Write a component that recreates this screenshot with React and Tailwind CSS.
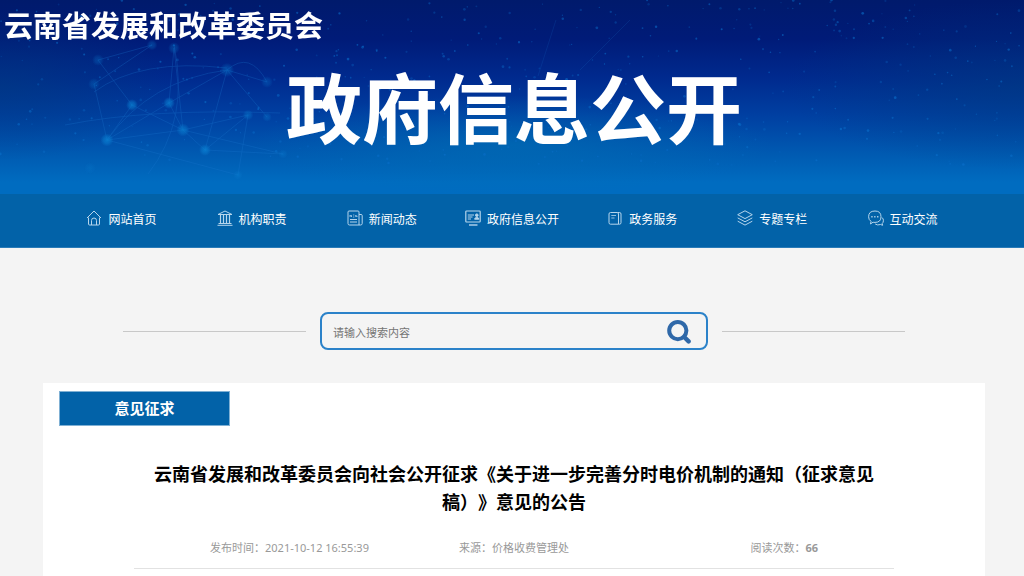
import React, { useState } from 'react';

const IconHome = () => (
    <>
        <path d="M1 8 L8 1 L15 8" />
        <path d="M2.5 7.5 V14 Q2.5 15 3.5 15 H12.5 Q13.5 15 13.5 14 V7.5" />
        <path d="M5.5 15 V10.5 Q5.5 8 8 8 Q10.5 8 10.5 10.5 V15" />
    </>
);

const IconBank = () => (
    <>
        <path d="M1 4.5 L8 1 L15 4.5 Z" />
        <path d="M3.5 5 V13.5 M6.5 5 V13.5 M9.5 5 V13.5 M12.5 5 V13.5" strokeWidth="1.2" />
        <path d="M1.5 13.5 H14.5 M0.5 15.3 H15.5" />
    </>
);

const IconNews = () => (
    <>
        <path d="M12 15 H2.5 Q1 15 1 13.5 V2 Q1 1 2 1 H11 Q12 1 12 2 Z" />
        <path d="M12 4.5 H14 Q15.2 4.5 15.2 5.5 V13.5 Q15.2 15 13.5 15 H12" />
        <path d="M3 7 V5 L4.5 7 V5 M6 5 H7.3 M6 7 H7.3 M8.3 5 L9 7 L9.6 5.5 L10.3 7" strokeWidth="0.7" />
        <path d="M3 9.5 H10 M3 12 H10" />
    </>
);

const IconBoard = () => (
    <>
        <rect x="0.8" y="1" width="14.4" height="11" rx="0.8" strokeWidth="1.2" />
        <path d="M2.8 5 H9 M2.8 7 H7.5 M2.8 9 H6" />
        <circle cx="11.8" cy="5.2" r="1.3" fill="currentColor" />
        <path d="M9.6 9.2 Q9.8 7.4 11.8 7.4 Q13.8 7.4 13.9 9.2 Z" fill="currentColor" />
        <path d="M4 15 H12.5" strokeWidth="1.4" />
    </>
);

const IconBook = () => (
    <>
        <path d="M11.5 14.2 H3.5 Q2 14.2 2 12.7 V4 Q2 2.5 3.5 2.5 H10 Q11.5 2.5 11.5 4 Z" />
        <path d="M11 2.5 H12.5 Q14 2.5 14 4 V12.7 Q14 14.2 12.5 14.2 H11.5" />
        <path d="M4.3 5.5 H9 M4.3 8 H7.5" strokeWidth="0.8" />
    </>
);

const IconLayers = () => (
    <>
        <path d="M8 0.8 L15.3 4.7 L8 8.6 L0.7 4.7 Z" />
        <path d="M0.7 7.9 L8 11.8 L15.3 7.9" />
        <path d="M0.7 11.2 L8 15.1 L15.3 11.2" />
    </>
);

const IconChat = () => (
    <>
        <path d="M2.5 14 L3 11.3 Q0.6 9.8 0.6 6.8 Q0.6 1 7 1 Q13 1 13 6.8 Q13 12.4 7 12.4 Q5.8 12.4 5 12.2 Z" />
        <path d="M14 7.5 Q15.6 8.8 15.4 10.8 Q15.3 12.6 14.2 13.5 L14.6 15.3 L12.6 14.5 Q9.5 15.6 7.2 14" />
        <path d="M3.3 6.8 H4.6 M6.2 6.8 H7.5 M9.1 6.8 H10.4" strokeWidth="1.5" />
    </>
);

const menu = [
    { label: '网站首页', Icon: IconHome },
    { label: '机构职责', Icon: IconBank },
    { label: '新闻动态', Icon: IconNews },
    { label: '政府信息公开', Icon: IconBoard },
    { label: '政务服务', Icon: IconBook },
    { label: '专题专栏', Icon: IconLayers },
    { label: '互动交流', Icon: IconChat },
];

// Nodos de la red: x, y, radio, opacidad
const nodes = [
    [132, 105, 5, 0.7], [169, 103, 5, 0.7], [183, 130, 5.5, 0.65], [107, 140, 5.5, 0.75],
    [205, 150, 5, 0.75], [227, 70, 6, 0.4], [94, 84, 5, 0.3], [174, 48, 5, 0.35],
    [152, 45, 4.5, 0.35], [248, 115, 4.5, 0.45], [267, 117, 4, 0.35], [98, 60, 5, 0.3],
    [267, 82, 5, 0.3], [90, 168, 5, 0.2], [238, 175, 4, 0.4], [283, 154, 4, 0.3],
];

const links = [
    [0, 3], [0, 11], [1, 5], [1, 7], [1, 2], [2, 4], [2, 9], [2, 7], [3, 6], [3, 1], [4, 5], [4, 15],
    [0, 2], [3, 14], [2, 3], [9, 14], [5, 10], [8, 11], [5, 12], [2, 15], [4, 9], [6, 8],
];

// Polvo de estrellas con semilla fija
const particles = Array.from({ length: 460 }, (_, i) => {
    const rnd = (k) => {
        const v = Math.sin((i + 1) * k) * 43758.5453;
        return v - Math.floor(v);
    };
    return { x: rnd(12.9898) * 1024, y: rnd(78.233) * 165, r: 0.6 + rnd(39.425) * 0.8, o: 0.2 + rnd(93.989) * 0.4 };
});

function Starfield() {
    return (
        <svg className="absolute inset-0 w-full h-full" viewBox="0 0 1024 194" preserveAspectRatio="xMidYMid slice" aria-hidden="true">
            <defs>
                <linearGradient id="sky" x1="0" y1="0" x2="0" y2="1">
                    <stop offset="0" stopColor="#001a6c" />
                    <stop offset="0.2" stopColor="#001b78" />
                    <stop offset="0.4" stopColor="#002a8e" />
                    <stop offset="0.6" stopColor="#0040a2" />
                    <stop offset="0.8" stopColor="#005bb2" />
                    <stop offset="0.94" stopColor="#006cc0" />
                    <stop offset="1" stopColor="#006cc0" />
                </linearGradient>
                <radialGradient id="side">
                    <stop offset="0" stopColor="#003c7c" stopOpacity="0.5" />
                    <stop offset="1" stopColor="#003c7c" stopOpacity="0" />
                </radialGradient>
                <radialGradient id="glow">
                    <stop offset="0" stopColor="#0070b4" stopOpacity="0.6" />
                    <stop offset="1" stopColor="#0070b4" stopOpacity="0" />
                </radialGradient>
                <radialGradient id="node">
                    <stop offset="0" stopColor="#0a84d4" />
                    <stop offset="0.5" stopColor="#0878cc" stopOpacity="0.8" />
                    <stop offset="1" stopColor="#0878cc" stopOpacity="0" />
                </radialGradient>
            </defs>
            <rect width="1024" height="194" fill="url(#sky)" />
            <ellipse cx="0" cy="85" rx="170" ry="75" fill="url(#side)" />
            <ellipse cx="1024" cy="85" rx="240" ry="85" fill="url(#side)" />
            <ellipse cx="512" cy="145" rx="260" ry="50" fill="url(#glow)" />
            <g stroke="#1a78d0" fill="none" strokeWidth="0.8" opacity="0.35">
                {links.map(([a, b]) => (
                    <line key={`${a}-${b}`} x1={nodes[a][0]} y1={nodes[a][1]} x2={nodes[b][0]} y2={nodes[b][1]} />
                ))}
                <path d="M94 92 Q140 58 227 68 M65 125 Q150 108 280 113 M107 140 Q150 80 227 70 M148 174 Q190 120 174 45 M227 70 Q250 50 267 82" />
                <path d="M538 76 L556 20 M580 70 L630 20" opacity="0.6" />
            </g>
            {particles.map((p, i) => (
                <circle key={i} cx={p.x} cy={p.y} r={p.r} fill="#0a70cc" opacity={p.o} />
            ))}
            {nodes.map(([x, y, r, o]) => (
                <circle key={`${x}-${y}`} cx={x} cy={y} r={r * 1.2} fill="url(#node)" opacity={o} />
            ))}
        </svg>
    );
}

export default function App() {
    const [query, setQuery] = useState('');

    return (
        <div className="min-h-screen bg-[#f4f4f4] font-['Noto_Sans','Noto_Sans_CJK_SC',sans-serif] [text-spacing-trim:space-all]">
            <header className="relative overflow-hidden pb-[33px]">
                <Starfield />
                <a href="#" className="relative block w-fit pl-[4px] pt-[5px] text-[29px] leading-[42px] font-bold text-white">
                    云南省发展和改革委员会
                </a>
                <h1 className="relative mt-[10px] pl-1 text-center text-[76px] leading-[104px] font-bold text-white">政府信息公开</h1>
            </header>

            <nav className="bg-[#0262a8] border-b border-[#2a7bb8]">
                <ul className="mx-auto grid w-[89%] grid-cols-7">
                    {menu.map(({ label, Icon }) => (
                        <li key={label}>
                            <a href="#" className="flex h-[53px] items-center justify-center gap-1.5 pb-0.5 text-[12px] text-white">
                                <svg className="mb-1 size-4 shrink-0 text-[#b5d5ec]" viewBox="0 0 16 16" fill="none" stroke="currentColor" strokeWidth="1">
                                    <Icon />
                                </svg>
                                <span className="whitespace-nowrap">{label}</span>
                            </a>
                        </li>
                    ))}
                </ul>
            </nav>

            <main className="pl-[43px] pr-[39px]">
                {/* Buscador */}
                <div className="flex items-center gap-[14px] px-20 pt-16">
                    <div className="flex-1 border-t border-[#c8c8c8]" />
                    <form
                        className="flex h-[38px] w-[388px] items-center rounded-lg border-2 border-[#2b82c9] pl-[11px] pr-[15px]"
                        onSubmit={(e) => e.preventDefault()}
                    >
                        <input
                            type="text"
                            aria-label="请输入搜索内容"
                            value={query}
                            onChange={(e) => setQuery(e.target.value)}
                            placeholder="请输入搜索内容"
                            className="min-w-0 flex-1 pt-1 text-[11px] text-gray-700 outline-none placeholder:text-[#757575]"
                        />
                        <button type="submit" aria-label="搜索" className="cursor-pointer pt-0.5">
                            <svg className="size-6" viewBox="0 0 24 24" fill="none" stroke="#2f68a8" strokeWidth="4">
                                <circle cx="10.8" cy="10.6" r="8.6" />
                                <path d="M17.2 17 L21.6 21.4" strokeWidth="4.4" strokeLinecap="round" />
                            </svg>
                        </button>
                    </form>
                    <div className="flex-1 border-t border-[#c8c8c8]" />
                </div>

                <article className="mt-[33px] min-h-[193px] bg-white px-4 pt-2">
                    <h2 className="w-[171px] border border-[#7fb0d4] bg-[#0262a8] text-center text-[15px] leading-[33px] font-bold text-white">
                        意见征求
                    </h2>
                    <div className="mx-[75px] border-b border-[#e2e2e2] pt-[34px] pb-3">
                        <h3 className="text-center text-[18px] leading-7 font-bold text-black">
                            云南省发展和改革委员会向社会公开征求《关于进一步完善分时电价机制的通知（征求意见稿）》意见的公告
                        </h3>
                        <div className="mt-6 grid grid-cols-3 px-[76px] text-[11px] leading-4 whitespace-nowrap text-[#999]">
                            <span>发布时间：2021-10-12 16:55:39</span>
                            <span className="text-center">来源：价格收费管理处</span>
                            <span className="text-right">
                                阅读次数：<b>66</b>
                            </span>
                        </div>
                    </div>
                </article>
            </main>
        </div>
    );
}
